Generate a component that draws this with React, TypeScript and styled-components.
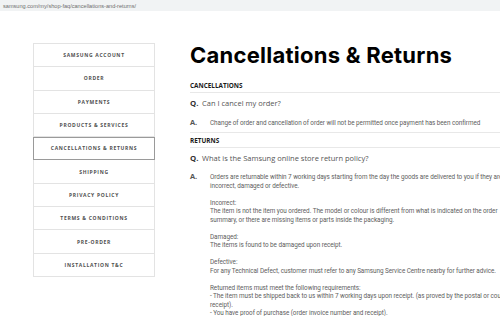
import styled, { createGlobalStyle } from "styled-components";

const GlobalStyle = createGlobalStyle`
    html, body {
        margin: 0;
        padding: 0;
        background: #ffffff;
        overflow: hidden;
    }
    body {
        width: 500px;
        height: 316px;
        font-family: "Roboto", "Liberation Sans", sans-serif;
    }
`;

const UrlBar = styled.div`
    height: 11px;
    background: #f1f3f4;
    display: flex;
    align-items: center;
    padding-left: 3px;
    font-family: "Liberation Sans", sans-serif;
    font-size: 5.6px;
    color: #6f6f6f;
`;

const Page = styled.div`
    display: flex;
    align-items: flex-start;
    padding: 32px 0 0 33px;
    width: 700px;
`;

const Sidebar = styled.ul`
    list-style: none;
    margin: 0;
    padding: 0;
    width: 120px;
    flex-shrink: 0;
    border: 1px solid #e3e3e3;
    border-bottom: none;
`;

const NavItem = styled.li<{ active?: boolean }>`
    height: 23.3px;
    box-sizing: border-box;
    display: flex;
    align-items: center;
    justify-content: center;
    border-bottom: 1px solid #e3e3e3;
    outline: ${(props) => (props.active ? "1px solid #9a9a9a" : "none")};
    outline-offset: -1px;
    margin: ${(props) => (props.active ? "0 -1px" : "0")};
    font-family: "Open Sans", sans-serif;
    font-weight: 700;
    font-size: 5px;
    letter-spacing: 0.7px;
    color: #4f4f4f;
`;

const Main = styled.div`
    margin-left: 35px;
    width: 480px;
`;

const Title = styled.h1`
    margin: 0;
    font-family: "Inter", sans-serif;
    font-weight: 700;
    font-size: 22px;
    letter-spacing: 0.25px;
    line-height: 24px;
    color: #000;
`;

const SectionHead = styled.h2`
    margin: 0;
    padding: 0 0 2px;
    font-family: "Open Sans", sans-serif;
    font-weight: 700;
    font-size: 6.4px;
    line-height: 9px;
    color: #1a1a1a;
    border-bottom: 1px solid #e8e8e8;
`;

const QRow = styled.div`
    display: flex;
    align-items: baseline;
    padding: 5px 0 0;
    font-family: "Open Sans", sans-serif;
    font-size: 7.5px;
    line-height: 11px;
    color: #555;
`;

const Mark = styled.span<{ wide?: boolean }>`
    width: ${(props) => (props.wide ? "20px" : "12px")};
    flex-shrink: 0;
    font-family: "Open Sans", sans-serif;
    font-weight: 700;
    font-size: ${(props) => (props.wide ? "7.4px" : "7.8px")};
    color: ${(props) => (props.wide ? "#555" : "#333")};
`;

const ARow = styled.div<{ last?: boolean }>`
    display: flex;
    align-items: baseline;
    padding: ${(props) => (props.last ? "7px 0 4px" : "8px 0 4px")};
    border-bottom: ${(props) => (props.last ? "none" : "1px solid #e8e8e8")};
`;

const Answer = styled.div`
    width: 300px;
    font-family: "Roboto", sans-serif;
    font-size: 6.35px;
    line-height: 8.6px;
    letter-spacing: -0.05px;
    color: #606060;
    p {
        margin: 0 0 8.3px;
    }
`;

const Gap = styled.div<{ h: number }>`
    height: ${(props) => props.h}px;
`;

const navItems = [
    "SAMSUNG ACCOUNT",
    "ORDER",
    "PAYMENTS",
    "PRODUCTS & SERVICES",
    "CANCELLATIONS & RETURNS",
    "SHIPPING",
    "PRIVACY POLICY",
    "TERMS & CONDITIONS",
    "PRE-ORDER",
    "INSTALLATION T&C",
];

function App() {
    return (
        <>
            <GlobalStyle />
            <UrlBar>samsung.com/my/shop-faq/cancellations-and-returns/</UrlBar>
            <Page>
                <Sidebar>
                    {navItems.map((item) => (
                        <NavItem
                            key={item}
                            active={item === "CANCELLATIONS & RETURNS"}
                        >
                            {item}
                        </NavItem>
                    ))}
                </Sidebar>
                <Main>
                    <Title>Cancellations &amp; Returns</Title>
                    <Gap h={14} />
                    <SectionHead>CANCELLATIONS</SectionHead>
                    <QRow>
                        <Mark>Q.</Mark>
                        Can I cancel my order?
                    </QRow>
                    <ARow>
                        <Mark wide>A.</Mark>
                        <Answer>
                            Change of order and cancellation of order will not
                            be permitted once payment has been confirmed
                        </Answer>
                    </ARow>
                    <Gap h={3.5} />
                    <SectionHead>RETURNS</SectionHead>
                    <QRow>
                        <Mark>Q.</Mark>
                        What is the Samsung online store return policy?
                    </QRow>
                    <ARow last>
                        <Mark wide>A.</Mark>
                        <Answer>
                            <p>
                                Orders are returnable within 7 working days
                                starting from the day the goods are delivered
                                to you if they are incorrect, damaged or
                                defective.
                            </p>
                            <p>
                                Incorrect:
                                <br />
                                The item is not the item you ordered. The model
                                or colour is different from what is indicated
                                on the order summary, or there are missing
                                items or parts inside the packaging.
                            </p>
                            <p>
                                Damaged:
                                <br />
                                The items is found to be damaged upon receipt.
                            </p>
                            <p>
                                Defective:
                                <br />
                                For any Technical Defect, customer must refer
                                to any Samsung Service Centre nearby for
                                further advice.
                            </p>
                            <p>
                                Returned items must meet the following
                                requirements:
                                <br />- The item must be shipped back to us
                                within 7 working days upon receipt. (as proved
                                by the postal or courier receipt).
                                <br />- You have proof of purchase (order
                                invoice number and receipt).
                                <br />- Item must be in new condition and
                                returned in its original packaging along with
                                all accessories (including manuals).
                            </p>
                        </Answer>
                    </ARow>
                </Main>
            </Page>
        </>
    );
}

export default App;
